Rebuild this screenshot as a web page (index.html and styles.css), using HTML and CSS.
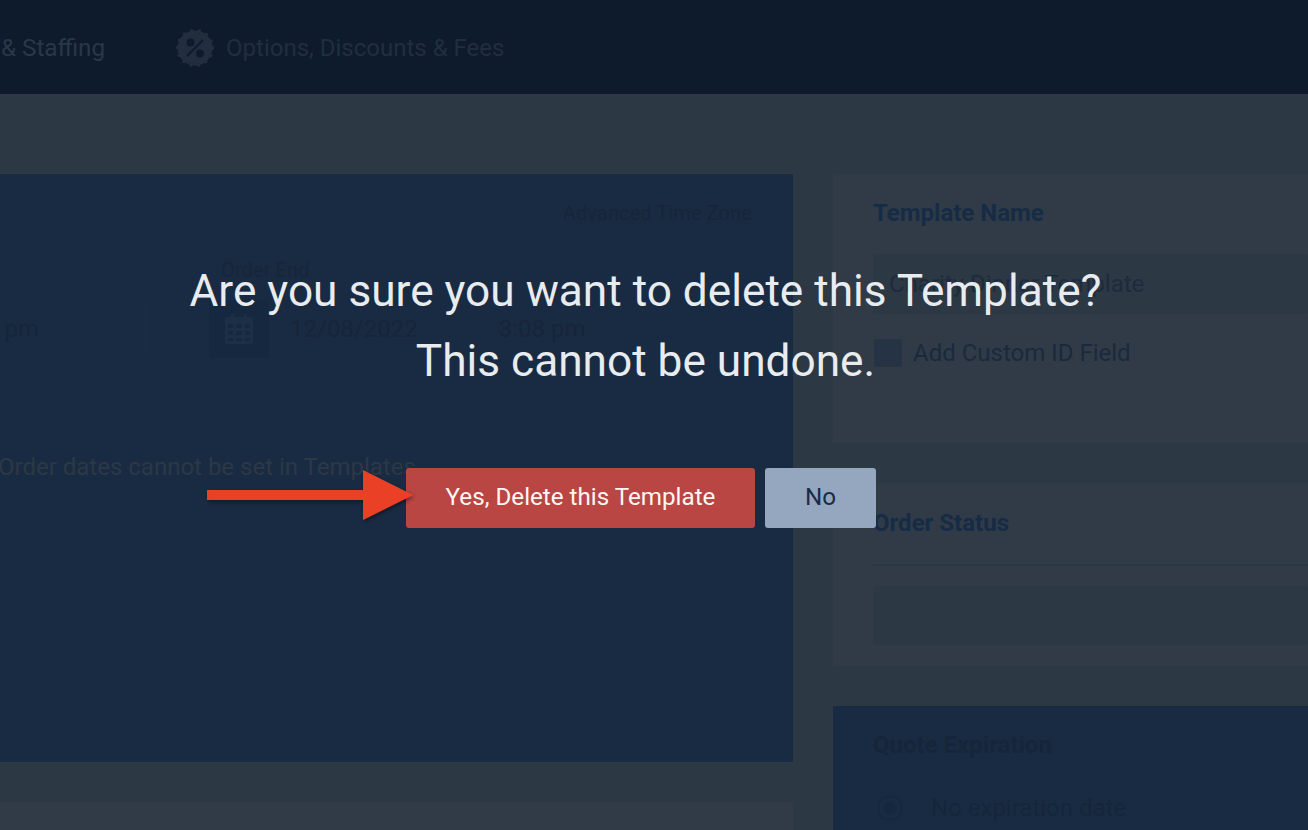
FILE: index.html
```html
<!DOCTYPE html>
<html lang="en">
<head>
    <meta charset="UTF-8">
    <meta name="viewport" content="width=device-width, initial-scale=1.0">
    <title>Delete Template</title>
    <link rel="stylesheet" href="styles.css">
</head>
<body>
    <header class="topbar">
        <span class="nav-item nav-first">&amp; Staffing</span>
        <span class="nav-item nav-options">
            <svg class="nav-icon" viewBox="0 0 40 40" width="40" height="40">
                <circle cx="20" cy="20" r="17.5" fill="#222e3e"/>
                <circle cx="20" cy="20" r="17.5" fill="none" stroke="#222e3e" stroke-width="3.6" stroke-linecap="round" stroke-dasharray="0 7.85"/>
                <circle cx="15.5" cy="14.5" r="4" fill="#0d1b2c"/>
                <circle cx="25" cy="25.5" r="4" fill="#0d1b2c"/>
                <path d="M12 28 L28 12" stroke="#0d1b2c" stroke-width="2"/>
            </svg>
            Options, Discounts &amp; Fees
        </span>
    </header>

    <main class="columns">
        <div class="col-left">
            <section class="panel panel-blue panel-dates">
                <div class="time-zone">Advanced Time Zone</div>
                <div class="date-label">Order End</div>
                <div class="date-row">
                    <div class="time-box">pm</div>
                    <div class="calendar-btn">
                        <svg viewBox="0 0 28 30" width="28" height="30">
                            <path fill="#1d2f47" fill-rule="evenodd" d="M2 3h4V0h3v3h10V0h3v3h4a2 2 0 0 1 2 2v23a2 2 0 0 1-2 2H2a2 2 0 0 1-2-2V5a2 2 0 0 1 2-2zM3 10v4h5v-4zm8 0v4h6v-4zm9 0v4h5v-4zM3 17v4h5v-4zm8 0v4h6v-4zm9 0v4h5v-4zM3 24v3h5v-3zm8 0v3h6v-3zm9 0v3h5v-3z"/>
                        </svg>
                    </div>
                    <span class="date-text">12/08/2022</span>
                    <span class="date-time">3:08 pm</span>
                </div>
                <p class="date-note">Order dates cannot be set in Templates</p>
            </section>
            <section class="panel panel-grey panel-below"></section>
        </div>

        <div class="col-right">
            <section class="panel panel-grey panel-name">
                <h2 class="panel-title">Template Name</h2>
                <div class="text-input">Charity Dinner Template</div>
                <label class="check-row">
                    <span class="check-box"></span>
                    Add Custom ID Field
                </label>
            </section>
            <section class="panel panel-grey panel-status">
                <h2 class="panel-title status-title">Order Status</h2>
                <div class="status-input"></div>
            </section>
            <section class="panel panel-blue panel-quote">
                <h2 class="panel-title quote-title">Quote Expiration</h2>
                <div class="radio-row">
                    <span class="radio"></span>
                    No expiration date
                </div>
            </section>
        </div>
    </main>

    <div class="overlay">
        <h1 class="confirm-text">Are you sure you want to delete this Template?<br>This cannot be undone.</h1>
        <div class="confirm-buttons">
            <button class="btn btn-yes">Yes, Delete this Template</button>
            <button class="btn btn-no">No</button>
            <svg class="arrow" viewBox="0 0 216 64" width="216" height="64">
                <defs>
                    <filter id="arrow-shadow" x="-5%" y="-20%" width="110%" height="140%">
                        <feDropShadow dx="1" dy="2" stdDeviation="2" flood-color="#000" flood-opacity="0.45"/>
                    </filter>
                </defs>
                <path fill="#ea4125" filter="url(#arrow-shadow)" d="M4 27H160V7L210 32L160 57V37H4z"/>
            </svg>
        </div>
    </div>
</body>
</html>
```

FILE: styles.css
```css
* {
    box-sizing: border-box;
}

html, body {
    height: 830px;
}

body {
    margin: 0;
    overflow: hidden;
    position: relative;
    font-family: Roboto, "Liberation Sans", sans-serif;
    font-size: 24px;
    background-color: #2c3843;
}

.topbar {
    display: flex;
    align-items: center;
    height: 94px;
    padding-top: 2px;
    background-color: #0d1b2c;
    color: #222e3e;
}

.nav-item {
    display: flex;
    align-items: center;
    white-space: nowrap;
}

.nav-first {
    margin-left: 1px;
    font-size: 24.2px;
    color: #2a3747;
}

.nav-options {
    margin-left: 70px;
}

.nav-icon {
    margin-right: 11px;
}

.columns {
    display: flex;
    gap: 40px;
    padding-top: 80px;
}

.col-left {
    flex: 0 0 793px;
}

.col-right {
    flex: 0 0 475px;
}

.panel-blue {
    background-color: #192b42;
}

.panel-grey {
    background-color: #303b47;
}

/* left column */
.panel-dates {
    height: 588px;
    padding-top: 27px;
    margin-bottom: 40px;
    overflow: hidden;
}

.panel-below {
    height: 28px;
}

.time-zone {
    text-align: right;
    padding-right: 41px;
    font-size: 20.2px;
    line-height: 24px;
    color: #16263a;
}

.date-label {
    margin: 33px 0 0 221px;
    font-size: 20.2px;
    line-height: 24px;
    color: #16263a;
}

.date-row {
    display: flex;
    align-items: center;
    height: 58px;
    margin-top: 18px;
    color: #16253a;
}

.time-box {
    display: flex;
    align-items: center;
    justify-content: flex-end;
    width: 146px;
    height: 58px;
    margin-right: 63px;
    padding-right: 106px;
    border-right: 1px solid #1b2d45;
}

.calendar-btn {
    display: flex;
    align-items: center;
    justify-content: center;
    flex: 0 0 60px;
    height: 58px;
    background-color: #152840;
    border-radius: 3px;
}

.date-text {
    margin-left: 21px;
}

.date-time {
    margin-left: 81px;
}

.date-note {
    margin: 95px 0 0 -2px;
    line-height: 28px;
    white-space: nowrap;
    color: #2c3845;
}

/* right column */
.panel-name {
    height: 269px;
    padding: 26px 0 0 40px;
}

.panel-status {
    height: 183px;
    margin-top: 40px;
    padding: 27px 0 0 40px;
}

.panel-quote {
    height: 124px;
    margin-top: 40px;
    padding: 26px 0 0 40px;
}

.panel-title {
    margin: 0;
    font-size: 24px;
    font-weight: 700;
    line-height: 27px;
    color: #162b45;
}

.quote-title {
    color: #15263b;
}

.text-input {
    display: flex;
    align-items: center;
    height: 60px;
    margin-top: 27px;
    padding-left: 16px;
    background-color: #2c3843;
    border-radius: 3px;
    color: #1d2b3d;
}

.check-row {
    display: flex;
    align-items: center;
    gap: 11px;
    margin-top: 25px;
    color: #1a2a3d;
}

.check-box {
    width: 28px;
    height: 28px;
    margin-left: 1px;
    background-color: #263345;
    border-radius: 3px;
}

.status-title {
    height: 56px;
    border-bottom: 2px solid #2a3746;
}

.status-input {
    height: 59px;
    margin-top: 20px;
    background-color: #2c3843;
    border-radius: 3px;
}

.radio-row {
    display: flex;
    align-items: center;
    gap: 28px;
    margin-top: 35px;
    margin-left: 4px;
    color: #14263c;
}

.radio {
    width: 26px;
    height: 26px;
    border: 2px solid #16283f;
    border-radius: 50%;
    background: radial-gradient(circle, #15273e 0 6px, transparent 7px);
}

/* confirm dialog on top of the page */
.overlay {
    position: absolute;
    top: 0;
    left: 0;
    right: 0;
    bottom: 0;
    display: flex;
    flex-direction: column;
    align-items: center;
    padding: 256px 17px 0 0;
}

.confirm-text {
    margin: 0;
    font-size: 44.2px;
    font-weight: 400;
    line-height: 70px;
    text-align: center;
    color: #e9ecef;
}

.confirm-buttons {
    position: relative;
    display: flex;
    gap: 10px;
    margin: 72px 9px 0 0;
}

.btn {
    height: 60px;
    padding: 0 0 2px;
    border: none;
    border-radius: 3px;
    font-family: inherit;
    font-size: 24.2px;
}

.btn-yes {
    width: 349px;
    background-color: #b94642;
    color: #fdf6f5;
}

.btn-no {
    width: 111px;
    background-color: #94a7bf;
    color: #1a2c44;
}

.arrow {
    position: absolute;
    left: -203px;
    top: -5px;
}
```
